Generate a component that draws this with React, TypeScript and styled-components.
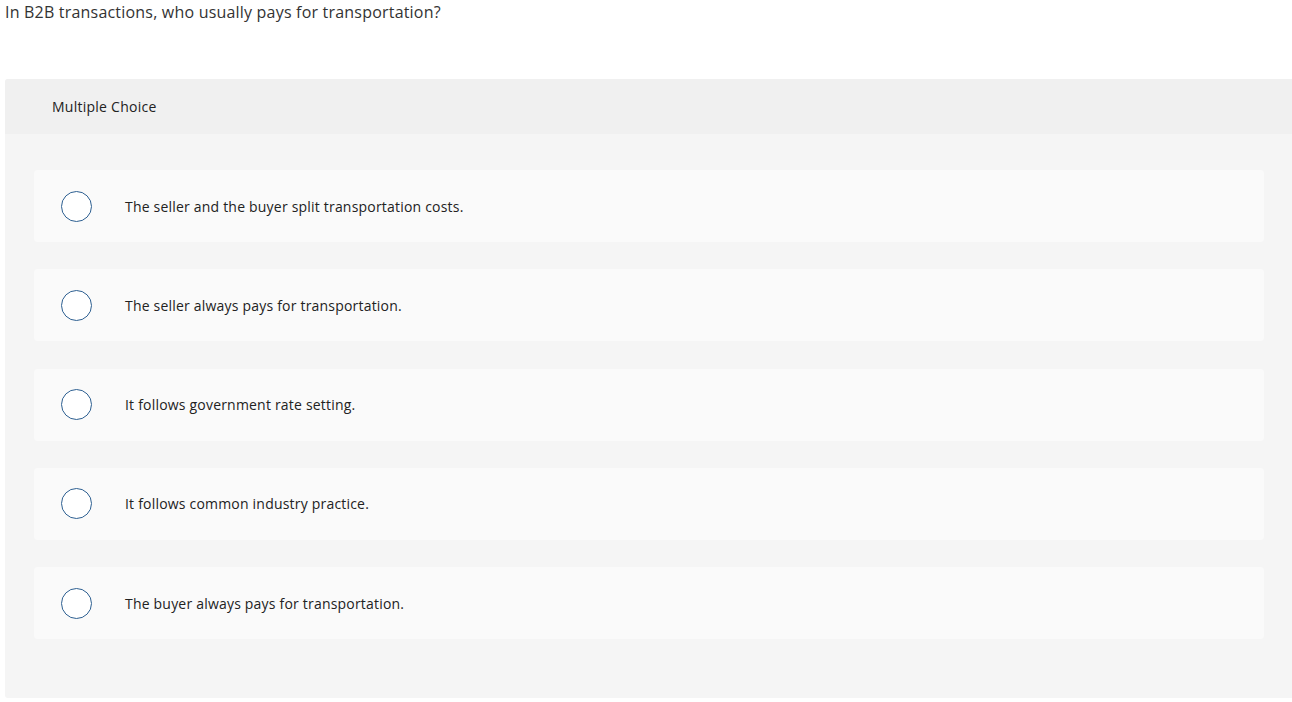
import styled, { createGlobalStyle } from 'styled-components'

const GlobalStyle = createGlobalStyle`
  html, body {
    margin: 0;
    padding: 0;
    background: #ffffff;
  }
  body {
    font-family: 'Open Sans', 'Liberation Sans', sans-serif;
    color: #222222;
  }
`

const Page = styled.div`
  width: 1292px;
  padding: 0 0 0 5px;
  box-sizing: border-box;
`

const Question = styled.p`
  margin: 0;
  padding-top: 2px;
  height: 77px;
  font-size: 16px;
  line-height: 20px;
  letter-spacing: 0.2px;
  color: #333333;
`

const Panel = styled.section`
  border-radius: 3px 0 0 3px;
  overflow: hidden;
  background: #f5f5f5;
`

const PanelHeader = styled.div`
  height: 55px;
  display: flex;
  align-items: center;
  padding-left: 47px;
  background: #f0f0f0;
  font-size: 14px;
  letter-spacing: 0.25px;
  color: #222222;
`

const Options = styled.div`
  display: flex;
  flex-direction: column;
  gap: 27.25px;
  padding: 36px 28px 59px 29px;
`

const Option = styled.label`
  height: 72px;
  display: flex;
  align-items: center;
  padding-left: 27px;
  border-radius: 4px;
  background: #fafafa;
  cursor: pointer;
`

const Radio = styled.span`
  width: 31px;
  height: 31px;
  box-sizing: border-box;
  border-radius: 50%;
  border: 1.5px solid #2d5f91;
  background: #ffffff;
  flex-shrink: 0;
`

const OptionText = styled.span`
  margin-left: 33px;
  font-size: 14px;
  letter-spacing: 0.2px;
  color: #222222;
`

const answers = [
  'The seller and the buyer split transportation costs.',
  'The seller always pays for transportation.',
  'It follows government rate setting.',
  'It follows common industry practice.',
  'The buyer always pays for transportation.',
]

export default function App() {
  return (
    <Page>
      <GlobalStyle />
      <Question>In B2B transactions, who usually pays for transportation?</Question>
      <Panel>
        <PanelHeader>Multiple Choice</PanelHeader>
        <Options>
          {answers.map((answer) => (
            <Option key={answer}>
              <Radio />
              <OptionText>{answer}</OptionText>
            </Option>
          ))}
        </Options>
      </Panel>
    </Page>
  )
}
